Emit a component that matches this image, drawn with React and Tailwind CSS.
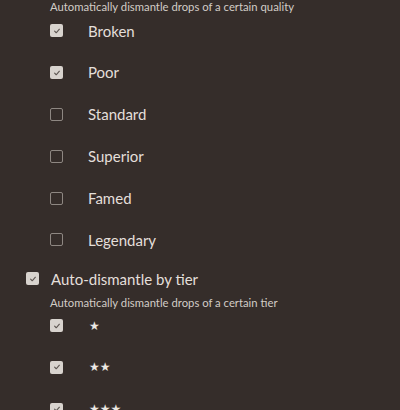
import React from "react";

const qualities = [
  { label: "Broken", checked: true },
  { label: "Poor", checked: true },
  { label: "Standard", checked: false },
  { label: "Superior", checked: false },
  { label: "Famed", checked: false },
  { label: "Legendary", checked: false },
];

const tiers = [
  { label: "★", checked: true },
  { label: "★★", checked: true },
  { label: "★★★", checked: true },
];

// Box drawn by hand so the tint matches the game's checkbox.
const Box = ({ checked }) =>
  checked ? (
    <span className="flex h-[13px] w-[13px] items-center justify-center rounded-[2px] bg-[#d8d3ce]">
      <svg viewBox="0 0 10 10" className="h-[8px] w-[8px]">
        <path d="M2 5.2 L4 7.2 L8 2.8" fill="none" stroke="#5d5652" strokeWidth="1.4" strokeLinecap="round" strokeLinejoin="round" />
      </svg>
    </span>
  ) : (
    <span className="block h-[13px] w-[13px] rounded-[2px] border-[1.5px] border-[#8e8782]" />
  );

const Row = ({ item, star }) => (
  <div className="flex h-[41.8px] items-center">
    <Box checked={item.checked} />
    <span
      className={
        star
          ? "ml-[26px] text-[12px] text-[#ece8e3] [font-family:'DejaVu_Sans',sans-serif]"
          : "ml-[25px] text-[15px] text-[#e4dfda]"
      }
    >
      {item.label}
    </span>
  </div>
);

export default function App() {
  return (
    <div className="h-[410px] w-[400px] overflow-hidden bg-[#352d2a] pl-[26px] [font-family:Lato,sans-serif]">
      <div className="pl-[24px]">
        <p className="h-[10px] text-[11.3px] leading-[13px] text-[#d2ccc6]">
          Automatically dismantle drops of a certain quality
        </p>
        {qualities.map((q) => (
          <Row key={q.label} item={q} />
        ))}
      </div>

      <div className="mt-[1px] flex h-[34px] items-center gap-[12px]">
        <Box checked />
        <span className="text-[15px] text-[#e4dfda]">Auto-dismantle by tier</span>
      </div>

      <div className="pl-[24px]">
        <p className="h-[9px] text-[11.3px] leading-[13px] text-[#d2ccc6]">
          Automatically dismantle drops of a certain tier
        </p>
        {tiers.map((t) => (
          <Row key={t.label} item={t} star />
        ))}
      </div>
    </div>
  );
}
